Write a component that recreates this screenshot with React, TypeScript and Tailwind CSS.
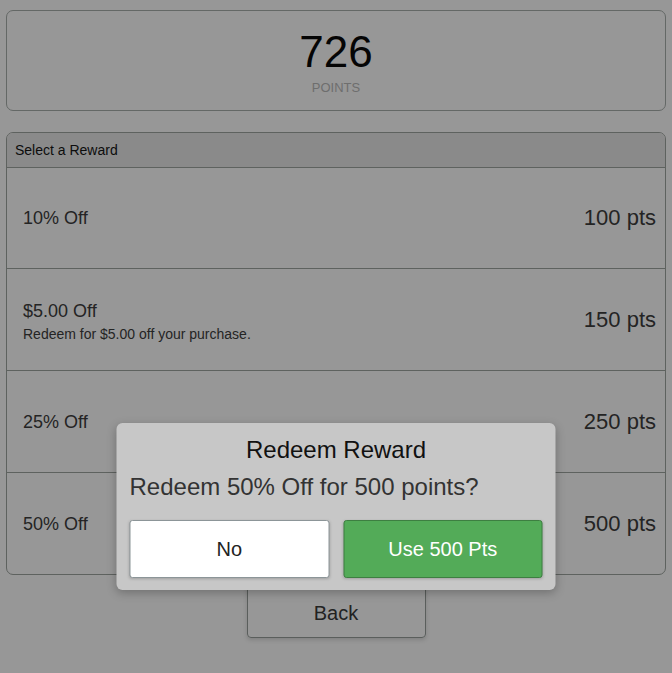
export default function App() {
  const rewards = [
    { name: "10% Off", desc: "", pts: 100 },
    { name: "$5.00 Off", desc: "Redeem for $5.00 off your purchase.", pts: 150 },
    { name: "25% Off", desc: "", pts: 250 },
    { name: "50% Off", desc: "", pts: 500 },
  ];

  return (
    <div
      className="relative min-h-screen w-full bg-[#979797] text-[#242424] overflow-hidden"
      style={{ fontFamily: '"Liberation Sans", Arial, sans-serif' }}
    >
      <div className="px-[6px] pt-[10px]">
        {/* points */}
        <div className="h-[101px] rounded-[7px] border border-[#646866] flex flex-col items-center pt-[16px]">
          <div className="text-[44px] leading-[50px] text-[#050505]">726</div>
          <div className="mt-[3px] text-[13px] leading-[16px] text-[#6e6e6e]">POINTS</div>
        </div>

        {/* rewards list */}
        <div className="mt-[21px] rounded-[7px] border border-[#5e625f] overflow-hidden">
          <div className="h-[35px] bg-[#8a8a8a] border-b border-[#5e625f] flex items-center px-[8px] text-[14px] text-[#0d0d0d]">
            Select a Reward
          </div>
          {rewards.map((r, i) => (
            <div
              key={i}
              className={
                "flex items-center justify-between pl-[16px] pr-[9px] " +
                (i > 0 ? "h-[102px] border-t border-[#5e625f]" : "h-[100px]")
              }
            >
              <div className={r.desc ? "pt-[4px]" : ""}>
                <div className="text-[18px] leading-[22px]">{r.name}</div>
                {r.desc && <div className="text-[14px] leading-[18px] mt-[3px]">{r.desc}</div>}
              </div>
              <div className="text-[22px] leading-[26px]">{r.pts} pts</div>
            </div>
          ))}
        </div>

        <div className="flex justify-center mt-[8px]">
          <button className="w-[179px] h-[55px] pt-[5px] rounded-[4px] border border-[#5a5e5c] text-[20px] text-[#222] shadow-[0_2px_4px_rgba(0,0,0,0.15)]">
            Back
          </button>
        </div>
      </div>

      {/* redeem dialog */}
      <div className="absolute top-[423px] left-1/2 -translate-x-1/2 w-[439px] h-[167px] rounded-[6px] bg-[#c7c7c7] shadow-[0_3px_10px_rgba(0,0,0,0.25)] px-[13px] pt-[12px]">
        <div className="text-center text-[24px] leading-[30px] text-[#111]">Redeem Reward</div>
        <div className="mt-[7px] text-[24px] leading-[30px] text-[#333]">Redeem 50% Off for 500 points?</div>
        <div className="mt-[18px] flex gap-[14px]">
          <button className="w-[200px] h-[58px] rounded-[3px] bg-white border border-[#8c9598] text-[20px] text-[#222] shadow-[0_1px_3px_rgba(0,0,0,0.2)]">
            No
          </button>
          <button className="w-[200px] h-[58px] rounded-[3px] bg-[#53ab58] border border-[#3d7f41] text-[20px] text-white shadow-[0_1px_3px_rgba(0,0,0,0.2)]">
            Use 500 Pts
          </button>
        </div>
      </div>
    </div>
  );
}
